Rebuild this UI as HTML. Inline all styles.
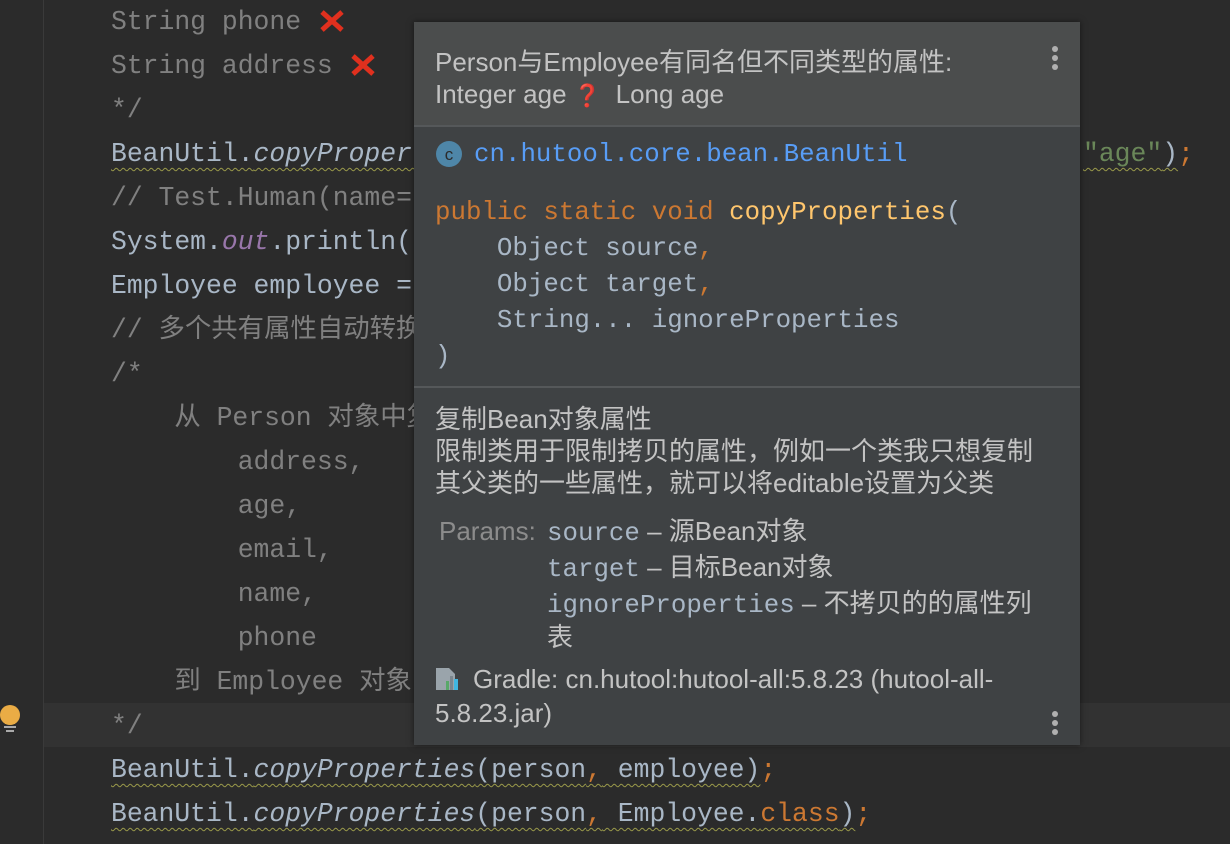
<!DOCTYPE html>
<html><head><meta charset="utf-8"><style>
*{margin:0;padding:0;box-sizing:border-box}
body{width:1230px;height:844px;background:#2b2b2b;overflow:hidden;position:relative;font-family:"Liberation Mono","Noto Sans CJK SC",monospace}
.gut{position:absolute;left:43px;top:0;width:1px;height:844px;background:#3a3a3a}
.hl{position:absolute;left:44px;top:703px;width:1186px;height:44px;background:#323232}
.l{position:absolute;left:111px;height:44px;line-height:44px;font-size:26.4px;white-space:pre;color:#a9b7c6;margin-top:1px}
.c{color:#808080}
.i{font-style:italic}
.o{color:#cc7832}
.p{color:#9876aa;font-style:italic}
.s{color:#6a8759}
.w{text-decoration:underline wavy #9a9a4a;text-underline-offset:6px;text-decoration-thickness:1px}
.pop{position:absolute;left:414px;top:22px;width:666px;height:723px;background:#3f4244;box-shadow:0 0 6px rgba(0,0,0,.5);font-family:"Liberation Sans","Noto Sans CJK SC",sans-serif;color:#c3c3c3}
.hd{position:absolute;left:0;top:0;width:666px;height:105px;background:#4b4d4d;border-bottom:2px solid #55585a}
.t{position:absolute;left:21px;white-space:pre;font-size:26px;line-height:32px;margin-top:2px}
.m{font-family:"Liberation Mono","Noto Sans CJK SC",monospace;font-size:25.8px}
.dots{position:absolute;width:6px}
.dots i{display:block;width:6px;height:6px;border-radius:3px;background:#b0b0b0;margin-bottom:3px}
</style></head><body>
<div class="gut"></div>
<div class="hl"></div>
<div class="l c" style="top:-1px">String phone </div>
<div class="l c" style="top:43px">String address </div>
<svg style="position:absolute;left:319px;top:9px" width="26" height="24"><path d="M3 3L23 21M23 3L3 21" stroke="#e0301e" stroke-width="5"/></svg>
<svg style="position:absolute;left:350px;top:53px" width="26" height="24"><path d="M3 3L23 21M23 3L3 21" stroke="#e0301e" stroke-width="5"/></svg>
<div class="l c" style="top:87px">*/</div>
<div class="l" style="top:131px"><span class="w">BeanUtil.<span class="i">copyProperties</span>(person, employee, </span></div>
<div class="l" style="top:131px;left:1083px"><span class="w"><span class="s">"age"</span>)</span><span class="o">;</span></div>
<div class="l c" style="top:175px">// Test.Human(name=</div>
<div class="l" style="top:219px">System.<span class="p">out</span>.println(</div>
<div class="l" style="top:263px">Employee employee =</div>
<div class="l c" style="top:307px">// 多个共有属性自动转换</div>
<div class="l c" style="top:351px">/*</div>
<div class="l c" style="top:395px">    从 Person 对象中复制</div>
<div class="l c" style="top:439px">        address,</div>
<div class="l c" style="top:483px">        age,</div>
<div class="l c" style="top:527px">        email,</div>
<div class="l c" style="top:571px">        name,</div>
<div class="l c" style="top:615px">        phone</div>
<div class="l c" style="top:659px">    到 Employee 对象</div>
<div class="l c" style="top:703px">*/</div>
<div class="l" style="top:747px"><span class="w">BeanUtil.<span class="i">copyProperties</span>(person<span class="o">,</span> employee)</span><span class="o">;</span></div>
<div class="l" style="top:791px"><span class="w">BeanUtil.<span class="i">copyProperties</span>(person<span class="o">,</span> Employee.<span class="o">class</span>)</span><span class="o">;</span></div>
<svg style="position:absolute;left:0;top:704px" width="22" height="28" viewBox="0 0 22 28"><circle cx="10" cy="11" r="10" fill="#eaac45"/><rect x="5" y="15" width="10" height="5" fill="#eaac45"/><rect x="4" y="22" width="12" height="2" fill="#aaa"/><rect x="6" y="26" width="8" height="2" fill="#aaa"/></svg>

<div class="pop">
<div class="hd"></div>
<div class="t" style="top:22px">Person与Employee有同名但不同类型的属性:</div>
<div class="t" style="top:54px">Integer age <span style="color:#d32f2f;font-size:22px">❓</span>  Long age</div>
<div class="dots" style="left:638px;top:24px"><i></i><i></i><i></i></div>
<svg style="position:absolute;left:21px;top:118px" width="28" height="28"><circle cx="14" cy="14" r="13" fill="#4e86a8"/><text x="14" y="20" text-anchor="middle" font-family="Liberation Sans" font-size="17" fill="#2b2b2b">c</text></svg>
<div class="t m" style="top:115px;left:60px;color:#589df6">cn.hutool.core.bean.BeanUtil</div>
<div class="t m" style="top:173px;color:#a9b7c6"><span class="o">public static void </span><span style="color:#ffc66d">copyProperties</span>(</div>
<div class="t m" style="top:209px;color:#a9b7c6">    Object source<span class="o">,</span></div>
<div class="t m" style="top:245px;color:#a9b7c6">    Object target<span class="o">,</span></div>
<div class="t m" style="top:281px;color:#a9b7c6">    String... ignoreProperties</div>
<div class="t m" style="top:317px;color:#a9b7c6">)</div>
<div style="position:absolute;left:0;top:364px;width:666px;height:2px;background:#55585a"></div>
<div class="t" style="top:379px">复制Bean对象属性</div>
<div class="t" style="top:411px">限制类用于限制拷贝的属性，例如一个类我只想复制</div>
<div class="t" style="top:443px">其父类的一些属性，就可以将editable设置为父类</div>
<div class="t" style="top:491px;left:25px;color:#8c8c8c">Params:</div>
<div class="t" style="top:491px;left:133px"><span class="m" style="color:#a9b7c6">source</span> – 源Bean对象</div>
<div class="t" style="top:527px;left:133px"><span class="m" style="color:#a9b7c6">target</span> – 目标Bean对象</div>
<div class="t" style="top:563px;left:133px"><span class="m" style="color:#a9b7c6">ignoreProperties</span> – 不拷贝的的属性列</div>
<div class="t" style="top:597px;left:133px">表</div>
<svg style="position:absolute;left:21px;top:645px" width="26" height="24"><path d="M1 1h13l6 6v16H1z" fill="#9aa4ab"/><rect x="11" y="14" width="3" height="9" fill="#59a869"/><rect x="15" y="9" width="3" height="14" fill="#7a868e"/><rect x="19" y="12" width="4" height="11" fill="#40b6e0"/></svg>
<div class="t" style="top:639px;left:59px">Gradle: cn.hutool:hutool-all:5.8.23 (hutool-all-</div>
<div class="t" style="top:673px">5.8.23.jar)</div>
<div class="dots" style="left:638px;top:689px"><i></i><i></i><i></i></div>
</div>
</body></html>
